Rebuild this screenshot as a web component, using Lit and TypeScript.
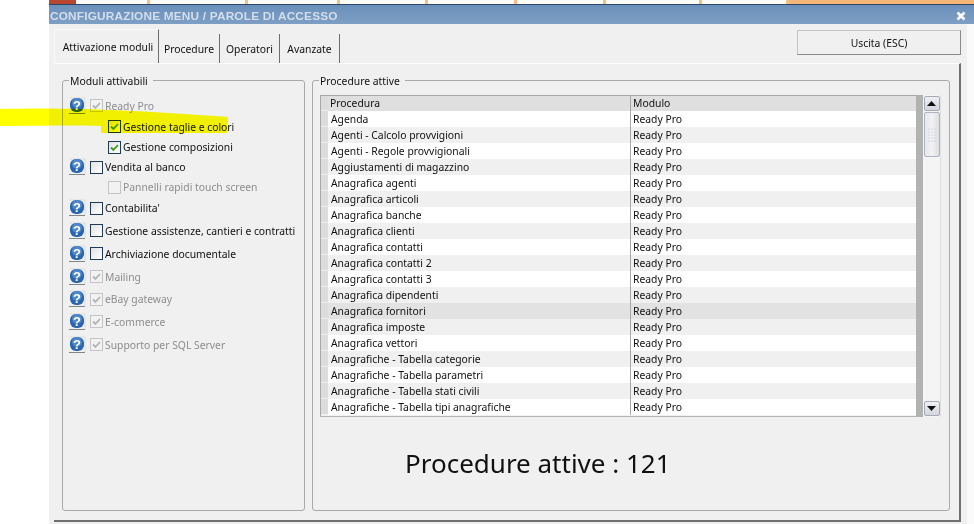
import { LitElement, html, svg, css } from "lit";
import { customElement } from "lit/decorators.js";

const rows = [
  "Agenda","Agenti - Calcolo provvigioni","Agenti - Regole provvigionali","Aggiustamenti di magazzino",
  "Anagrafica agenti","Anagrafica articoli","Anagrafica banche","Anagrafica clienti","Anagrafica contatti",
  "Anagrafica contatti 2","Anagrafica contatti 3","Anagrafica dipendenti","Anagrafica fornitori","Anagrafica imposte",
  "Anagrafica vettori","Anagrafiche - Tabella categorie","Anagrafiche - Tabella parametri","Anagrafiche - Tabella stati civili",
  "Anagrafiche - Tabella tipi anagrafiche",
];
type Mod = { label: string; h: number; help?: boolean; indent?: number; state: "off" | "on" | "dis" | "disoff" };
const mods: Mod[] = [
  { label: "Ready Pro", h: 21, help: true, state: "dis" },
  { label: "Gestione taglie e colori", h: 21, indent: 1, state: "on" },
  { label: "Gestione composizioni", h: 20, indent: 1, state: "on" },
  { label: "Vendita al banco", h: 20, help: true, state: "off" },
  { label: "Pannelli rapidi touch screen", h: 20, indent: 1, state: "disoff" },
  { label: "Contabilita'", h: 22, help: true, state: "off" },
  { label: "Gestione assistenze, cantieri e contratti", h: 23, help: true, state: "off" },
  { label: "Archiviazione documentale", h: 23, help: true, state: "off" },
  { label: "Mailing", h: 23, help: true, state: "dis" },
  { label: "eBay gateway", h: 22, help: true, state: "dis" },
  { label: "E-commerce", h: 23, help: true, state: "dis" },
  { label: "Supporto per SQL Server", h: 23, help: true, state: "dis" },
];
const ticks = [101, 98, 92, 88, 89, 89, 96, 87];

@customElement("app-root")
export class AppRoot extends LitElement {
  static styles = css`
    :host { display: block; width: 974px; height: 524px; background: #fff; position: relative; overflow: hidden;
      font-family: "Noto Sans", sans-serif; font-size: 10.35px; color: #111; }
    .strip { height: 4px; margin-left: 49px; background: #fbfbf8; border-bottom: 1px solid #2c4468; display: flex; position: relative; }
    .strip i { flex: none; height: 4px; box-sizing: border-box; border-right: 3px solid #f2c188; }
    .strip b { flex: 1; background: #f6b677; }
    .red { position: absolute; left: 0; top: 0; width: 27px; height: 4px; background: #b8472e; }
    .win { margin-left: 49px; width: 925px; height: 519px; background: #fafafa; display: flex; flex-direction: column; box-sizing: border-box; }
    .title { height: 19px; flex: none; background: linear-gradient(#6a90bb, #7e9fc4); display: flex; align-items: center; justify-content: space-between;
      color: #d3deec; padding: 2px 8px 0 1px; box-sizing: border-box; }
    .title span { font: bold 11.8px "Liberation Sans", sans-serif; letter-spacing: 0.2px; }
    .title svg { display: block; }
    .body { flex: 1; width: 918px; background: #f0f0f0; padding: 5px 6px 2px 5px; box-sizing: border-box; display: flex; flex-direction: column; }
    .top { display: flex; justify-content: space-between; height: 34px; flex: none; }
    .tabs { display: flex; align-items: flex-end; }
    .tab { height: 29px; display: flex; align-items: center; justify-content: center; box-sizing: border-box; border-right: 1px solid #6e6e6e; background: #f0f0f0; }
    .tab.active { height: 34px; border-left: 1px solid #fafafa; border-top: 1px solid #fafafa; width: 105px; padding-left: 3px; }
    .w61 { width: 61px; }
    .w60 { width: 60px; }
    .uscita { width: 164px; height: 25px; margin-top: 1px; box-sizing: border-box; background: #f0f0f0; border: 1px solid #c4c4c4; border-right-color: #8a8a8a; border-bottom-color: #8a8a8a;
      display: flex; align-items: center; justify-content: center; }
    .panel { flex: 1; display: flex; gap: 7px; box-sizing: border-box; border-top: 1px solid #fcfcfc; border-right: 2px solid #707070; border-bottom: 2px solid #707070;
      padding: 16px 9px 9px 8px; }
    .group { position: relative; border: 1px solid #a9a9a9; border-radius: 3px; box-sizing: border-box; padding-top: 14px; }
    .group .legend { position: absolute; left: 6px; top: -7px; background: #f0f0f0; padding: 0 5px 0 1px; line-height: 15px; }
    .left { width: 243px; flex: none; padding-left: 6px; }
    .right { flex: 1; min-width: 0; padding: 14px 8px 0 7px; }
    .mods { display: flex; flex-direction: column; }
    .mod { display: flex; align-items: center; white-space: nowrap; }
    .help { width: 17px; height: 18px; flex: none; margin-right: 4px; display: block; }
    .noh { width: 21px; flex: none; }
    .ind { width: 18px; flex: none; }
    .box { width: 13px; height: 13px; box-sizing: border-box; border: 1px solid #1f3a55; background: linear-gradient(135deg,#e2e2e2,#fff); margin-right: 2px; flex: none; display: block; }
    .box.dis, .box.disoff { border-color: #c4c4c4; background: #f2f2f2; }
    .dim { color: #8e8e8e; }
    .gridwrap { display: flex; height: 322px; }
    .grid { width: 596px; flex: none; display: flex; flex-direction: column; border-top: 1px solid #a8a8a8; border-left: 1px solid #a8a8a8; box-sizing: border-box; overflow: hidden; border-bottom: 1px solid #b4b4b4; }
    .row { display: flex; height: 16px; flex: none; line-height: 16px; }
    .sel { width: 7px; flex: none; background: #dcdcdc; border-bottom: 1px solid #eee; box-sizing: border-box; }
    .c1 { width: 303px; flex: none; padding-left: 3px; box-sizing: border-box; border-right: 1px solid #a8a8a8; white-space: nowrap; }
    .c2 { flex: 1; padding-left: 2px; }
    .row.hd { background: #dfdfdf; height: 15px; line-height: 15px; }
    .row.hd .c1 { padding-left: 2px; }
    .row.a { background: #fff; }
    .row.b { background: #f0f0f0; }
    .row.sel-row { background: #e2e2e2; }
    .band { width: 7px; flex: none; background: #b2b2b2; }
    .sb { width: 18px; flex: none; background: #f4f4f4; border-right: 1px solid #e0e0e0; box-sizing: border-box; display: flex; flex-direction: column; align-items: center; padding: 1px 0; }
    .btn { width: 16px; height: 15px; flex: none; box-sizing: border-box; border: 1px solid #a6aab4; border-radius: 2px; background: linear-gradient(#eef0f4,#d4d6de); display: flex; align-items: center; justify-content: center; }
    .thumb { width: 16px; height: 45px; margin-top: 1px; flex: none; box-sizing: border-box; border: 1px solid #b0b4be; border-radius: 2px; background: linear-gradient(90deg,#e6e7ec,#f2f2f4,#dcdde2); display: flex; align-items: center; justify-content: center; }
    .sp { flex: 1; }
    .total { font-size: 26px; margin: 29px 0 0 85px; line-height: 34px; white-space: nowrap; }
    .mark { position: absolute; left: 0; top: 0; mix-blend-mode: multiply; pointer-events: none; }
  `;

  private helpIcon() {
    return html`<svg class="help" viewBox="0 0 17 18">
      <path d="M0.500 1h15.500v15" fill="none" stroke="#dcdcdc"/>
      <path d="M0 16.500h16" stroke="#7f868c"/>
      <rect x="1" y="1" width="14" height="14" rx="6" fill="#2a66ad"/>
      <circle cx="8" cy="6" r="5" fill="#5f97d6" opacity=".7"/>
      <text x="8" y="12.500" text-anchor="middle" font-family="Liberation Sans, sans-serif" font-weight="700" font-size="13" fill="#fff">?</text>
    </svg>`;
  }

  private box(state: Mod["state"]) {
    const check = state === "on" ? "#3f9a20" : "#b4b4b4";
    return html`<svg class="box ${state}" viewBox="0 0 11 11">
      ${state === "on" || state === "dis" ? svg`<path d="M2 5.500l2.400 2.400L9 3" fill="none" stroke=${check} stroke-width="1.800"/>` : ""}
    </svg>`;
  }

  render() {
    return html`
      <div class="strip"><span class="red"></span>${ticks.map((w) => html`<i style="width:${w}px"></i>`)}<b></b></div>
      <div class="win">
        <div class="title"><span>CONFIGURAZIONE MENU / PAROLE DI ACCESSO</span>
          <svg width="10" height="10" viewBox="0 0 10 10"><path d="M1.500 1.500l7 7M8.500 1.500l-7 7" stroke="#fff" stroke-width="2.600"/></svg>
        </div>
        <div class="body">
          <div class="top">
            <div class="tabs">
              <div class="tab active">Attivazione moduli</div>
              <div class="tab w61">Procedure</div>
              <div class="tab w60">Operatori</div>
              <div class="tab w60">Avanzate</div>
            </div>
            <div class="uscita">Uscita (ESC)</div>
          </div>
          <div class="panel">
            <div class="group left">
              <div class="legend">Moduli attivabili</div>
              <div class="mods">
                ${mods.map((m) => html`<div class="mod" style="height:${m.h}px">
                  ${m.help ? this.helpIcon() : html`<span class="noh"></span>`}
                  ${m.indent ? html`<span class="ind"></span>` : ""}
                  ${this.box(m.state)}
                  <span class=${m.state === "dis" || m.state === "disoff" ? "dim" : ""}>${m.label}</span>
                </div>`)}
              </div>
            </div>
            <div class="group right">
              <div class="legend">Procedure attive</div>
              <div class="gridwrap">
                <div class="grid">
                  <div class="row hd"><div class="sel"></div><div class="c1">Procedura</div><div class="c2">Modulo</div></div>
                  ${rows.map((r, i) => html`<div class="row ${r === "Anagrafica fornitori" ? "sel-row" : i % 2 ? "b" : "a"}"><div class="sel"></div><div class="c1">${r}</div><div class="c2">Ready Pro</div></div>`)}
                </div>
                <div class="band"></div>
                <div class="sb">
                  <div class="btn"><svg width="9" height="5" viewBox="0 0 9 5"><path d="M4.500 0l4.500 5H0z" fill="#111"/></svg></div>
                  <div class="thumb"><svg width="8" height="14" viewBox="0 0 8 14" fill="#b8bac2"><circle cx="1" cy="1" r=".6"/><circle cx="4" cy="1" r=".6"/><circle cx="7" cy="1" r=".6"/><circle cx="1" cy="4" r=".6"/><circle cx="4" cy="4" r=".6"/><circle cx="7" cy="4" r=".6"/><circle cx="1" cy="7" r=".6"/><circle cx="4" cy="7" r=".6"/><circle cx="7" cy="7" r=".6"/><circle cx="1" cy="10" r=".6"/><circle cx="4" cy="10" r=".6"/><circle cx="7" cy="10" r=".6"/><circle cx="1" cy="13" r=".6"/><circle cx="4" cy="13" r=".6"/><circle cx="7" cy="13" r=".6"/></svg></div>
                  <div class="sp"></div>
                  <div class="btn"><svg width="9" height="5" viewBox="0 0 9 5"><path d="M0 0h9L4.500 5z" fill="#111"/></svg></div>
                </div>
              </div>
              <div class="total">Procedure attive : 121</div>
            </div>
          </div>
        </div>
      </div>
      <svg class="mark" width="974" height="524"><path d="M0 109 C60 107 140 110 228 117 L227 133 L101 133 L101 126 C70 125 30 126 0 126Z" fill="#ffff00"/></svg>
    `;
  }
}
